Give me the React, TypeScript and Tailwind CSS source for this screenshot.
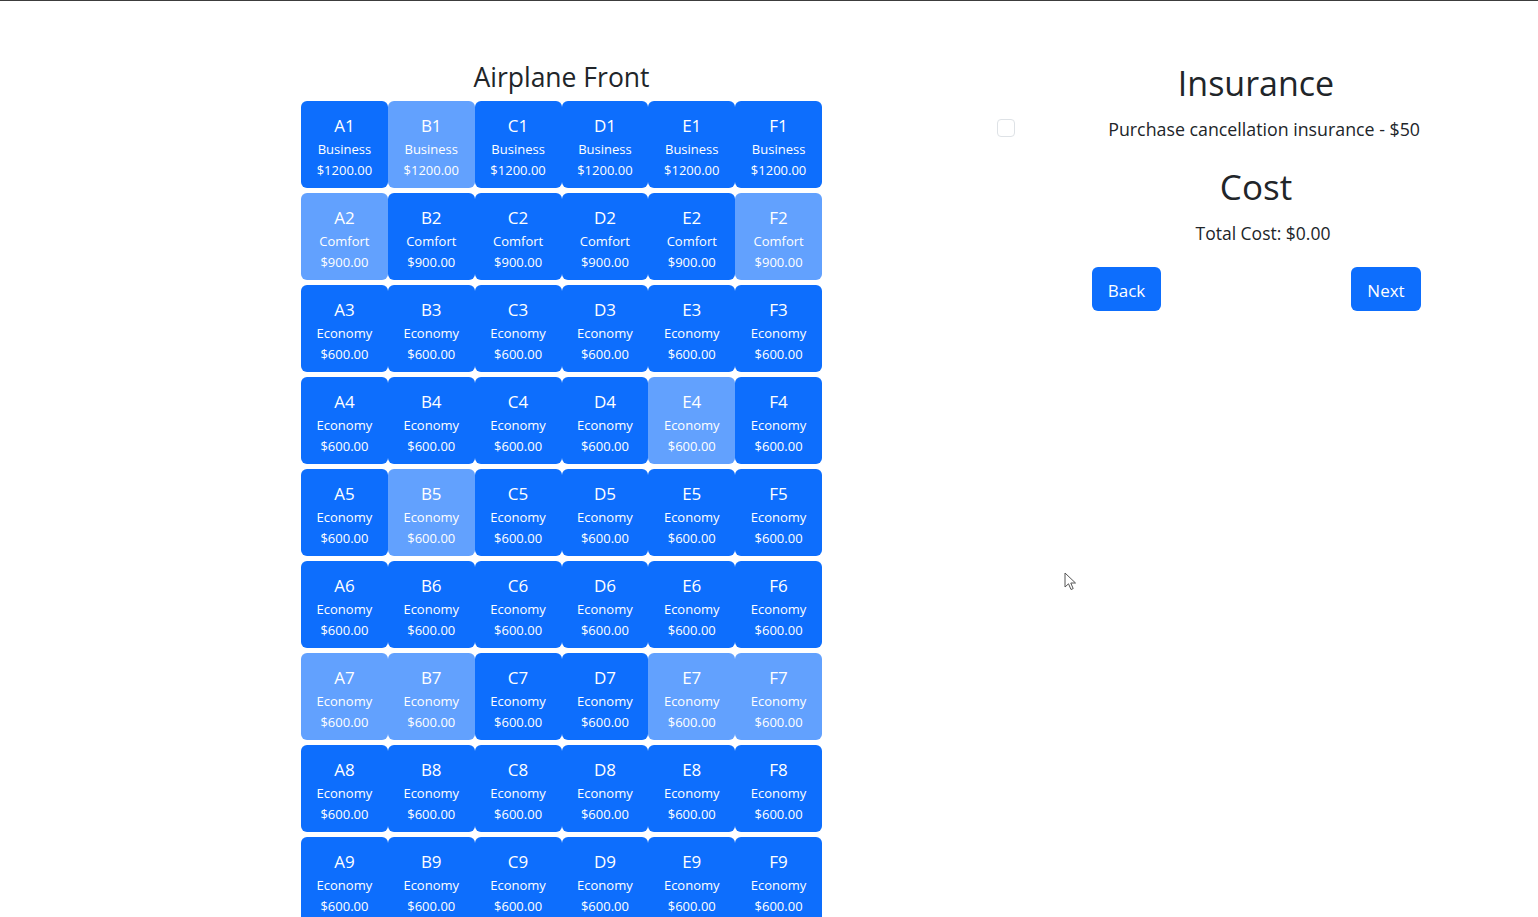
import React from 'react';

const cols = ['A', 'B', 'C', 'D', 'E', 'F'];
const taken = new Set(['B1', 'A2', 'F2', 'E4', 'B5', 'A7', 'B7', 'E7', 'F7']);

function seatClass(row: number) {
    if (row === 1) return { name: 'Business', price: '$1200.00' };
    if (row === 2) return { name: 'Comfort', price: '$900.00' };
    return { name: 'Economy', price: '$600.00' };
}

function Seat({ id, row }: { id: string; row: number }) {
    const info = seatClass(row);
    const off = taken.has(id);
    return (
        <button
            className={`h-[87px] rounded-[6px] text-white flex flex-col items-center pt-[11px] ${off ? 'bg-[#62a1fe]' : 'bg-[#0d6efd]'}`}
        >
            <span className="text-[17px] leading-[27px]">{id}</span>
            <span className="text-[13px] leading-[21px]">{info.name}</span>
            <span className="text-[13px] leading-[21px]">{info.price}</span>
        </button>
    );
}

export default function App() {
    const rows = [1, 2, 3, 4, 5, 6, 7, 8, 9];
    return (
        <div className="relative w-[1538px] h-[917px] overflow-hidden bg-white text-[#212529]" style={{ fontFamily: '"Open Sans", "Noto Sans", sans-serif' }}>
            <div className="h-px bg-[#3c3c3c]" />
            <div className="flex items-start">
                {/* Seat map */}
                <div className="ml-[301px] w-[521px] mt-[60px] flex flex-col">
                    <h2 className="text-[26.5px] leading-[32px] text-center mb-[8px]">Airplane Front</h2>
                    <div className="grid grid-cols-6 gap-y-[5px]">
                        {rows.map(r => cols.map(c => <Seat key={c + r} id={c + r} row={r} />))}
                    </div>
                </div>

                {/* Insurance / cost */}
                <div className="ml-[175px] w-[424px] mt-[62px] flex flex-col">
                    <h2 className="pl-[94px] text-center text-[34px] leading-[40px]">Insurance</h2>
                    <div className="mt-[14px] flex items-center justify-between">
                        <span className="w-[18px] h-[18px] rounded-[4px] border border-[#dee2e6] bg-white -mt-[3px]" />
                        <span className="text-[17.8px] leading-[24px] pr-[1px]">Purchase cancellation insurance - $50</span>
                    </div>
                    <h2 className="pl-[94px] mt-[26px] text-center text-[35px] leading-[40px]">Cost</h2>
                    <p className="pl-[108px] mt-[14px] text-center text-[17.5px] leading-[24px]">Total Cost: $0.00</p>
                    <div className="pl-[95px] mt-[22px] flex justify-between">
                        <button className="w-[69px] h-[44px] pt-[3px] rounded-[6px] bg-[#0d6efd] text-white text-[17px]">Back</button>
                        <button className="w-[70px] h-[44px] pt-[3px] rounded-[6px] bg-[#0d6efd] text-white text-[17px]">Next</button>
                    </div>
                </div>
            </div>

            {/* mouse pointer */}
            <svg className="absolute left-[1064px] top-[572px]" width="14" height="20" viewBox="0 0 14 20">
                <path d="M1 1 L1 15 L4.5 11.8 L7 17.5 L9.2 16.6 L6.8 11 L11.5 11 Z" fill="#fff" stroke="#555" strokeWidth="1" strokeLinejoin="round" />
            </svg>
        </div>
    );
}
